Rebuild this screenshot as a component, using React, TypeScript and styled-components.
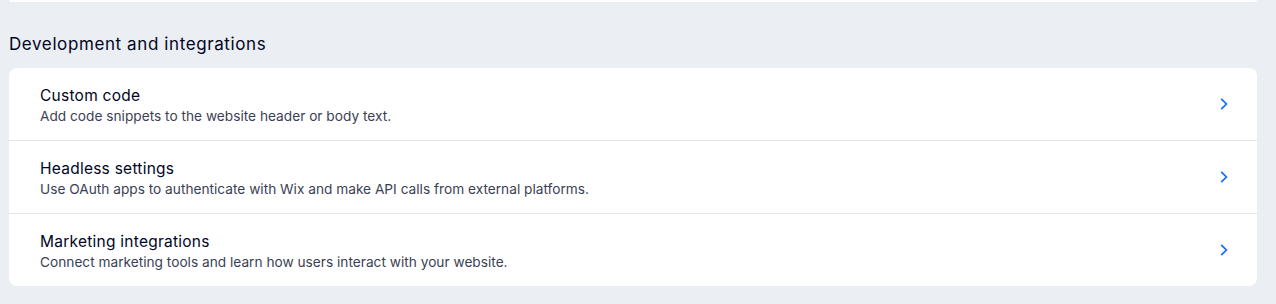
import styled, { createGlobalStyle } from "styled-components";

const GlobalStyle = createGlobalStyle`
  body {
    margin: 0;
    background: #ebeef3;
    font-family: Inter, "Noto Sans", sans-serif;
    color: #000624;
  }
`;

const items = [
  {
    title: "Custom code",
    desc: "Add code snippets to the website header or body text.",
  },
  {
    title: "Headless settings",
    desc: "Use OAuth apps to authenticate with Wix and make API calls from external platforms.",
  },
  {
    title: "Marketing integrations",
    desc: "Connect marketing tools and learn how users interact with your website.",
  },
];

function Chevron() {
  return (
    <svg width="8" height="12" viewBox="0 0 8 12" fill="none">
      <path d="M1.2 0.8L6.4 6L1.2 11.2" stroke="#116dff" strokeWidth="1.7" />
    </svg>
  );
}

function App() {
  return (
    <Page>
      <GlobalStyle />
      <TopCard />
      <SectionTitle>Development and integrations</SectionTitle>
      <Card>
        {items.map((item) => (
          <Row key={item.title}>
            <RowText>
              <RowTitle>{item.title}</RowTitle>
              <RowDesc>{item.desc}</RowDesc>
            </RowText>
            <Chevron />
          </Row>
        ))}
      </Card>
    </Page>
  );
}

const Page = styled.div`
  display: flex;
  flex-direction: column;
  padding: 0 19px 0 9px;
  height: 304px;
  box-sizing: border-box;
`;

const TopCard = styled.div`
  height: 2px;
  background: #ffffff;
  border-radius: 0 0 8px 8px;
`;

const SectionTitle = styled.div`
  margin: 30px 0 12px;
  font-size: 17px;
  line-height: 24px;
  font-weight: 400;
  letter-spacing: 0.6px;
  color: #000624;
`;

const Card = styled.div`
  background: #ffffff;
  border-radius: 8px;
  overflow: hidden;
`;

const Row = styled.div`
  display: flex;
  align-items: center;
  justify-content: space-between;
  height: 72px;
  padding: 0 29px 0 31px;
  & + & {
    border-top: 1px solid #e2e5ea;
  }
`;

const RowText = styled.div`
  display: flex;
  flex-direction: column;
  padding-top: 3px;
`;

const RowTitle = styled.div`
  font-size: 15.5px;
  line-height: 20px;
  font-weight: 400;
  letter-spacing: 0.25px;
  color: #000624;
`;

const RowDesc = styled.div`
  font-size: 13.7px;
  line-height: 20px;
  color: #3b3f54;
`;

export default App;
